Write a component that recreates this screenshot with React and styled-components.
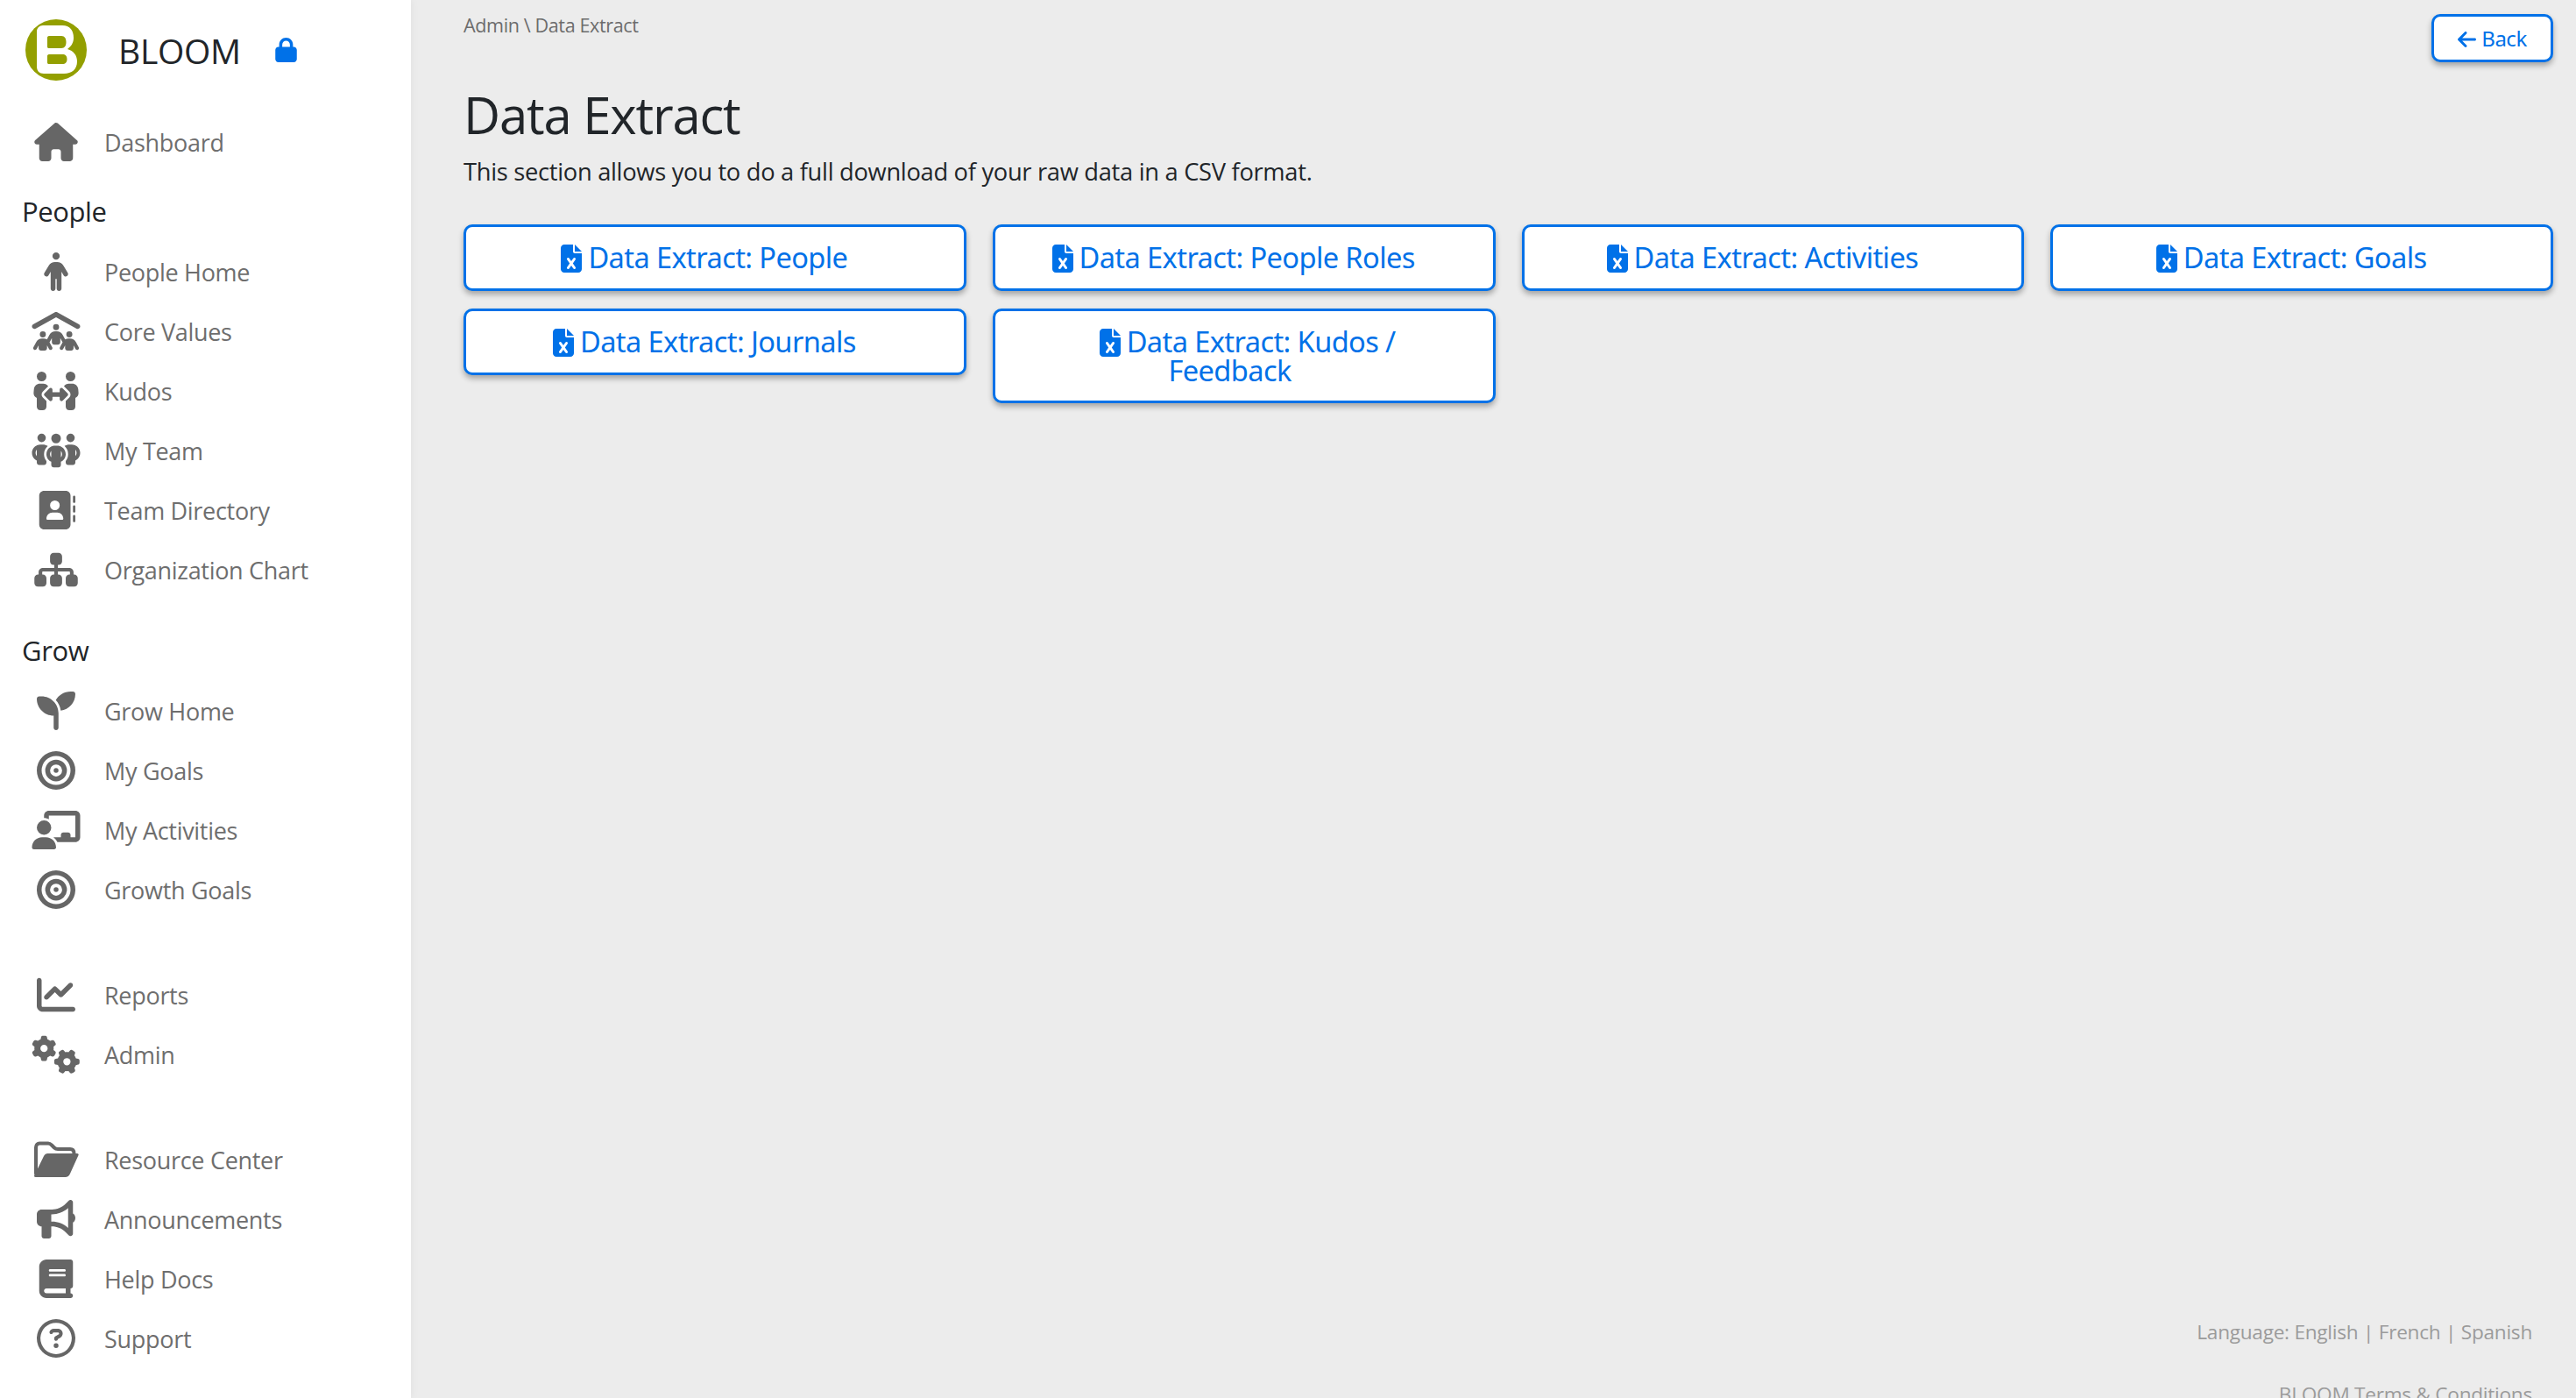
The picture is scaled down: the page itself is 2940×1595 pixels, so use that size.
import React from "react";
import styled, { createGlobalStyle } from "styled-components";
import {
  FaHouse, FaPerson, FaPeopleRoof, FaPeopleArrows, FaPeopleGroup, FaAddressBook, FaSitemap,
  FaSeedling, FaBullseye, FaChalkboardUser, FaChartLine, FaGears, FaBullhorn, FaBook,
  FaRegCircleQuestion, FaLock, FaFileExcel, FaArrowLeft,
} from "react-icons/fa6";

const Global = createGlobalStyle`
  html, body { margin: 0; padding: 0; height: 100%; overflow: hidden; background: #ececec; }
  #root { height: 100%; }
  * { box-sizing: border-box; }
`;

const Shell = styled.div`
  display: grid;
  grid-template-columns: 469px 1fr;
  height: 1595px;
  overflow: hidden;
  background: #ececec;
  font-family: "Open Sans", "Noto Sans", sans-serif;
`;

const Sidebar = styled.aside`
  background: #fff;
  box-shadow: 0 0 10px rgba(0, 0, 0, 0.06);
  display: flex;
  flex-direction: column;
  padding-top: 22px;
  position: relative;
  z-index: 1;
`;

const Brand = styled.div`
  display: flex;
  align-items: center;
  height: 70px;
  padding-left: 29px;
  margin-bottom: 36px;
`;

const BrandName = styled.span`
  font-size: 39px;
  letter-spacing: -0.3px;
  color: #212529;
  margin-left: 36px;
  margin-right: 39px;
`;

const LockIcon = styled(FaLock)`
  width: 25px;
  height: 28px;
  color: #0071e8;
`;

const NavGroup = styled.div`
  display: flex;
  flex-direction: column;
  margin-top: ${(p) => p.$top || 0}px;
`;

const Heading = styled.div`
  font-size: 31px;
  line-height: 44px;
  font-weight: 500;
  letter-spacing: -0.4px;
  color: #212529;
  padding-left: 25px;
  margin-bottom: 13px;
`;

const Row = styled.div`
  display: flex;
  align-items: center;
  height: 68px;
  color: #666;
`;

const IconCell = styled.div`
  width: 119px;
  padding-left: 36px;
  flex: none;
  display: flex;
  svg { width: 56px; height: 44px; display: block; }
`;

const RowLabel = styled.span`
  font-size: 27px;
  letter-spacing: -0.3px;
  color: #6e6e6e;
`;

const Main = styled.main`
  display: flex;
  flex-direction: column;
  padding: 16px 26px 0 60px;
  min-width: 0;
`;

const TopBar = styled.div`
  display: flex;
  justify-content: space-between;
  align-items: flex-start;
  height: 75px;
`;

const Crumb = styled.div`
  font-size: 21.6px;
  letter-spacing: -0.4px;
  line-height: 26px;
  color: #6c6c6c;
`;

const Title = styled.h1`
  margin: 12px 0 0;
  font-size: 58px;
  font-weight: 400;
  letter-spacing: -1.2px;
  line-height: 56px;
  color: #212529;
`;

const Lead = styled.p`
  margin: 18px 0 0;
  font-size: 27.3px;
  letter-spacing: -0.3px;
  line-height: 38px;
  color: #212529;
`;

const ButtonGrid = styled.div`
  display: grid;
  grid-template-columns: repeat(4, 1fr);
  column-gap: 30px;
  row-gap: 20px;
  align-items: start;
  margin-top: 41px;
`;

const Button = styled.button`
  font-family: "Noto Sans", "Open Sans", sans-serif;
  background: #fff;
  color: #0071e8;
  border: 3px solid #0071e8;
  border-radius: 10px;
  box-shadow: 0 4px 6px rgba(0, 0, 0, 0.3);
  font-size: 32.6px;
  line-height: 32px;
  letter-spacing: -0.6px;
  padding: 19px 36px 18px 12px;
  text-align: center;
  svg { width: 24px; height: 32px; vertical-align: -5px; margin-right: 7px; }
`;

const BackButton = styled(Button)`
  width: 139px;
  height: 55px;
  padding: 0;
  font-size: 24px;
  line-height: 28px;
  letter-spacing: -0.5px;
  svg { width: 21px; height: 24px; vertical-align: -4px; margin-right: 6px; }
`;

const ButtonLine = styled.span`
  display: block;
  margin: ${(p) => p.$margin};
`;

const Spacer = styled.div`
  flex: 1;
`;

const Footer = styled.footer`
  flex: none;
  text-align: right;
  color: #9b9b9b;
  font-size: 22.6px;
  letter-spacing: -0.25px;
  line-height: 32px;
  padding-right: 24px;
  margin-bottom: -12px;
`;

const FooterLine = styled.div`
  margin-top: ${(p) => p.$top || 0}px;
`;

const Logo = () => (
  <svg width="70" height="70" viewBox="0 0 70 70" aria-label="BLOOM logo">
    <circle cx="35" cy="35" r="35" fill="#939f00" />
    <path
      fill="#fff"
      fillRule="evenodd"
      d="M20 7H42C51 7 55 13 55 21C55 27 52 31 48 34C55 36 59 41 59 48C59 57 53 62 44 62H21C16 62 13 59 13 54V14C13 10 16 7 20 7Z
         M27 19C25.500 19 25 20 25 21V31C25 32.500 25.500 33 27 33H41C45 33 46.500 30 46.500 26C46.500 22 45 19 41 19Z
         M27 40C25.500 40 25 41 25 42V49C25 50.500 25.500 51 27 51H42C46 51 47.500 49 47.500 45.500C47.500 42 46 40 42 40Z"
    />
  </svg>
);

const FolderIcon = () => (
  <svg viewBox="0 0 56 44" aria-hidden="true">
    <path
      d="M5 38V8C5 5 7 3.500 9 3.500H19C21 3.500 22 4.500 23 5.500L26 8.500C27 9.500 28 10 30 10H44C47 10 48.500 12 48.500 15"
      fill="none"
      stroke="currentColor"
      strokeWidth="4"
      strokeLinecap="round"
    />
    <path
      fill="currentColor"
      d="M3 40.500L14 18C15 16 16.500 15 18.500 15H52C53.500 15 54 16 53.500 17L44 38C43 40.500 41 42 38.500 42H8C4 42 2.500 42 3 40.500Z"
    />
  </svg>
);

const groups = [
  { top: 0, items: [["Dashboard", FaHouse]] },
  {
    top: 23,
    title: "People",
    items: [
      ["People Home", FaPerson],
      ["Core Values", FaPeopleRoof],
      ["Kudos", FaPeopleArrows],
      ["My Team", FaPeopleGroup],
      ["Team Directory", FaAddressBook],
      ["Organization Chart", FaSitemap],
    ],
  },
  {
    top: 36,
    title: "Grow",
    items: [
      ["Grow Home", FaSeedling],
      ["My Goals", FaBullseye],
      ["My Activities", FaChalkboardUser],
      ["Growth Goals", FaBullseye],
    ],
  },
  {
    top: 52,
    items: [
      ["Reports", FaChartLine],
      ["Admin", FaGears],
    ],
  },
  {
    top: 52,
    items: [
      ["Resource Center", FolderIcon],
      ["Announcements", FaBullhorn],
      ["Help Docs", FaBook],
      ["Support", FaRegCircleQuestion],
    ],
  },
];

const extracts = ["People", "People Roles", "Activities", "Goals", "Journals"];

export default function App() {
  return (
    <>
      <Global />
      <Shell>
        <Sidebar>
          <Brand>
            <Logo />
            <BrandName>BLOOM</BrandName>
            <LockIcon />
          </Brand>
          {groups.map((g, i) => (
            <NavGroup key={i} $top={g.top}>
              {g.title && <Heading>{g.title}</Heading>}
              {g.items.map(([label, Icon]) => (
                <Row key={label}>
                  <IconCell>
                    <Icon />
                  </IconCell>
                  <RowLabel>{label}</RowLabel>
                </Row>
              ))}
            </NavGroup>
          ))}
        </Sidebar>
        <Main>
          <TopBar>
            <Crumb>Admin \ Data Extract</Crumb>
            <BackButton>
              <FaArrowLeft />
              Back
            </BackButton>
          </TopBar>
          <Title>Data Extract</Title>
          <Lead>This section allows you to do a full download of your raw data in a CSV format.</Lead>
          <ButtonGrid>
            {extracts.map((name) => (
              <Button key={name}>
                <FaFileExcel />
                Data Extract: {name}
              </Button>
            ))}
            <Button>
              <ButtonLine $margin="0 0 0 32px">
                <FaFileExcel />
                Data Extract: Kudos /
              </ButtonLine>
              <ButtonLine $margin="0 8px 0 0">Feedback</ButtonLine>
            </Button>
          </ButtonGrid>
          <Spacer />
          <Footer>
            <FooterLine>Language: English | French | Spanish</FooterLine>
            <FooterLine $top={39}>BLOOM Terms &amp; Conditions</FooterLine>
          </Footer>
        </Main>
      </Shell>
    </>
  );
}
